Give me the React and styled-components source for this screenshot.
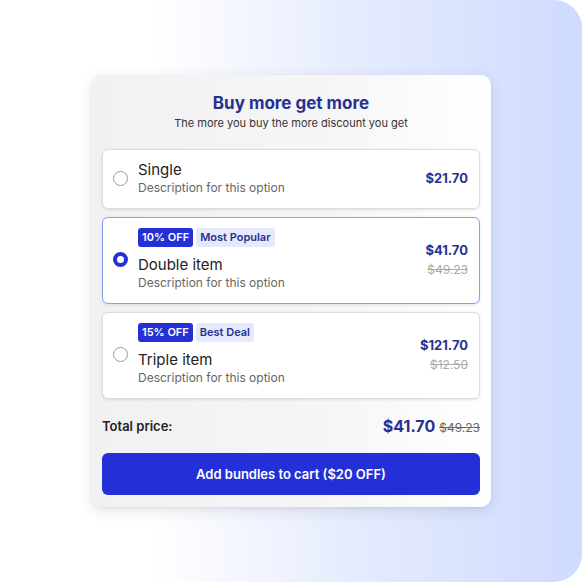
import React from 'react'
import styled, { createGlobalStyle } from 'styled-components'

const GlobalStyle = createGlobalStyle`
    html, body {
        margin: 0;
        padding: 0;
        background: #fff;
        font-family: 'Inter', 'Liberation Sans', sans-serif;
    }
    * { box-sizing: border-box; }
`;

const Page = styled.div`
    width: 582px;
    height: 582px;
    display: flex;
    align-items: center;
    justify-content: center;
    border-radius: 0 28px 28px 0;
    background: linear-gradient(90deg, #ffffff 0%, #ffffff 26%, #e6ecfd 60%, #cfdbfd 100%);
`;

const Card = styled.div`
    width: 400px;
    display: flex;
    flex-direction: column;
    padding: 17px 11px 12px;
    border-radius: 10px;
    background: linear-gradient(90deg, #f1f1f1 0%, #f6f6f6 60%, #ffffff 100%);
    box-shadow: 0px 4px 14px rgba(40, 50, 90, 0.12), 0px 1px 3px rgba(0, 0, 0, 0.06);
`;

const Title = styled.div`
    font-size: 17px;
    line-height: 22px;
    font-weight: 700;
    color: #27318f;
    text-align: center;
`;

const Subtitle = styled.div`
    font-size: 11px;
    line-height: 14px;
    color: #333;
    text-align: center;
    margin-top: 2px;
`;

const Options = styled.div`
    display: flex;
    flex-direction: column;
    gap: 8px;
    margin-top: 19px;
`;

const Option = styled.div`
    display: flex;
    align-items: center;
    padding: 10px 11px 12px 10px;
    background: #fff;
    border-radius: 6px;
    border: 1px solid ${props => props.selected ? '#8e9ef5' : '#dcdcdc'};
    box-shadow: ${props => props.selected ? '0 1px 3px rgba(60, 80, 200, 0.15)' : '0 1px 3px rgba(0, 0, 0, 0.1)'};
`;

const Radio = styled.span`
    width: 15px;
    height: 15px;
    flex-shrink: 0;
    border-radius: 50%;
    border: ${props => props.checked ? '4px solid #2531d6' : '1px solid #9a9a9a'};
    background: #fff;
`;

const Info = styled.div`
    flex: 1;
    display: flex;
    flex-direction: column;
    margin-left: 10px;
`;

const Badges = styled.div`
    display: flex;
    gap: 3px;
    margin-bottom: 8px;
`;

const Badge = styled.span`
    font-size: 11px;
    line-height: 19px;
    font-weight: 600;
    padding: 0 4px;
    border-radius: 3px;
    color: ${props => props.primary ? '#fff' : '#27318f'};
    background: ${props => props.primary ? '#2531d6' : '#e5e9fb'};
`;

const Name = styled.div`
    font-size: 15px;
    line-height: 20px;
    color: #222;
`;

const Desc = styled.div`
    font-size: 12px;
    line-height: 16px;
    color: #666;
`;

const Prices = styled.div`
    display: flex;
    flex-direction: column;
    align-items: flex-end;
    gap: 2px;
`;

const Price = styled.span`
    font-size: 13px;
    line-height: 18px;
    font-weight: 700;
    color: #28318f;
`;

const OldPrice = styled.span`
    font-size: 12px;
    line-height: 18px;
    color: #aaa;
    text-decoration: line-through;
`;

const TotalRow = styled.div`
    display: flex;
    align-items: center;
    justify-content: space-between;
    margin-top: 17px;
`;

const TotalLabel = styled.span`
    font-size: 13px;
    font-weight: 600;
    color: #222;
`;

const TotalPrices = styled.div`
    display: flex;
    align-items: baseline;
    gap: 4px;
`;

const TotalPrice = styled.span`
    font-size: 16px;
    font-weight: 700;
    color: #28318f;
`;

const TotalOld = styled.span`
    font-size: 12px;
    color: #666;
    text-decoration: line-through;
`;

const CartButton = styled.button`
    margin-top: 17px;
    height: 42px;
    border: none;
    border-radius: 6px;
    background: #2430d7;
    color: #fff;
    font-family: inherit;
    font-size: 13px;
    font-weight: 600;
    cursor: pointer;
`;

const options = [
    { name: 'Single', price: '$21.70' },
    { name: 'Double item', price: '$41.70', old: '$49.23', off: '10% OFF', tag: 'Most Popular', selected: true },
    { name: 'Triple item', price: '$121.70', old: '$12.50', off: '15% OFF', tag: 'Best Deal' },
];

export default function App() {
    return (
        <>
            <GlobalStyle />
            <Page>
                <Card>
                    <Title>Buy more get more</Title>
                    <Subtitle>The more you buy the more discount you get</Subtitle>
                    <Options>
                        {options.map(opt => (
                            <Option key={opt.name} selected={opt.selected}>
                                <Radio checked={opt.selected} />
                                <Info>
                                    {opt.off && (
                                        <Badges>
                                            <Badge primary>{opt.off}</Badge>
                                            <Badge>{opt.tag}</Badge>
                                        </Badges>
                                    )}
                                    <Name>{opt.name}</Name>
                                    <Desc>Description for this option</Desc>
                                </Info>
                                <Prices>
                                    <Price>{opt.price}</Price>
                                    {opt.old && <OldPrice>{opt.old}</OldPrice>}
                                </Prices>
                            </Option>
                        ))}
                    </Options>
                    <TotalRow>
                        <TotalLabel>Total price:</TotalLabel>
                        <TotalPrices>
                            <TotalPrice>$41.70</TotalPrice>
                            <TotalOld>$49.23</TotalOld>
                        </TotalPrices>
                    </TotalRow>
                    <CartButton>Add bundles to cart ($20 OFF)</CartButton>
                </Card>
            </Page>
        </>
    )
}
